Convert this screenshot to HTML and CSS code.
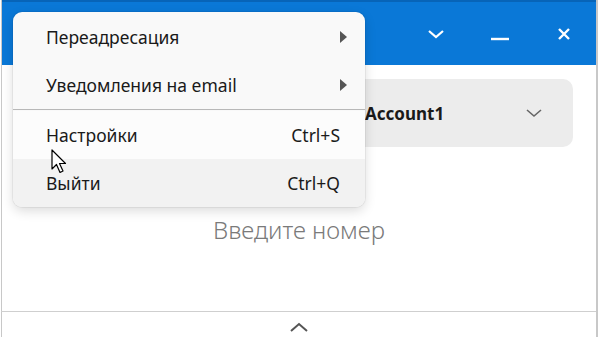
FILE: index.html
```html
<!DOCTYPE html>
<html lang="ru">
<head>
  <meta charset="UTF-8" />
  <title>Phone</title>
  <link rel="stylesheet" href="styles.css">
</head>
<body>
  <div class="window">
    <div class="titlebar">
      <span class="tb-btn">
        <svg width="18" height="12" viewBox="0 0 18 12"><path d="M2 3 L9 9 L16 3" fill="none" stroke="#fff" stroke-width="2.2"/></svg>
      </span>
      <span class="tb-btn">
        <svg width="20" height="14" viewBox="0 0 20 14"><path d="M1 12 H19" stroke="#fff" stroke-width="2.4"/></svg>
      </span>
      <span class="tb-btn">
        <svg width="14" height="14" viewBox="0 0 14 14"><path d="M2 2 L12 12 M12 2 L2 12" stroke="#fff" stroke-width="2.4"/></svg>
      </span>
    </div>

    <div class="content">
      <div class="account">
        <span class="account-name">Account1</span>
        <svg width="18" height="12" viewBox="0 0 18 12"><path d="M2 3 L9 9 L16 3" fill="none" stroke="#666" stroke-width="1.6"/></svg>
      </div>
      <div class="placeholder">Введите номер</div>
    </div>

    <div class="footer">
      <svg width="20" height="12" viewBox="0 0 20 12"><path d="M2 10 L10 3 L18 10" fill="none" stroke="#555" stroke-width="2"/></svg>
    </div>

    <div class="menu">
      <div class="item">
        <span>Переадресация</span>
        <svg width="9" height="14" viewBox="0 0 9 14"><path d="M1 1 L8 7 L1 13 Z" fill="#555"/></svg>
      </div>
      <div class="item">
        <span>Уведомления на email</span>
        <svg width="9" height="14" viewBox="0 0 9 14"><path d="M1 1 L8 7 L1 13 Z" fill="#555"/></svg>
      </div>
      <div class="sep"></div>
      <div class="item light">
        <span>Настройки</span>
        <span class="key">Ctrl+S</span>
      </div>
      <div class="item hover">
        <span>Выйти</span>
        <span class="key">Ctrl+Q</span>
      </div>
    </div>

    <svg class="cursor" width="18" height="26" viewBox="0 0 18 26">
      <path d="M1 1 L1 20 L5.5 15.5 L9 23.5 L12 22 L8.5 14.5 L14.5 14.5 Z" fill="#fff" stroke="#000" stroke-width="1.2" stroke-linejoin="round"/>
    </svg>
  </div>
</body>
</html>
```

FILE: styles.css
```css
html, body {
  margin: 0;
  padding: 0;
  background: #ffffff;
  font-family: 'Noto Sans', 'Open Sans', sans-serif;
  overflow: hidden;
}

.window {
  position: relative;
  width: 594px;
  height: 337px;
  border-left: 1px solid #c8c8c8;
  border-right: 2px solid #c8c8c8;
  margin-left: 1px;
  display: flex;
  flex-direction: column;
}

.titlebar {
  height: 63px;
  background: #0a78d7;
  border-top: 2px solid #0764b8;
  display: flex;
  justify-content: flex-end;
  align-items: center;
}

.tb-btn {
  width: 64px;
  height: 40px;
  display: flex;
  align-items: center;
  justify-content: center;
}

.content {
  flex: 1;
  display: flex;
  flex-direction: column;
  align-items: center;
}

.account {
  align-self: flex-end;
  margin: 14px 23px 0 0;
  width: 226px;
  height: 68px;
  background: #ececec;
  border-radius: 10px;
  display: flex;
  align-items: center;
  justify-content: space-between;
  padding: 0 30px 0 18px;
  box-sizing: border-box;
}

.account-name {
  font-size: 17px;
  font-weight: 700;
  color: #1a1a1a;
}

.placeholder {
  margin-top: 66px;
  font-size: 24px;
  font-weight: 300;
  color: #7a7a7a;
}

.footer {
  height: 20px;
  border-top: 1px solid #cfcfcf;
  display: flex;
  justify-content: center;
  align-items: center;
  margin-left: -1px;
  padding-top: 5px;
}

.menu {
  position: absolute;
  left: 11px;
  top: 12px;
  width: 352px;
  padding-top: 1px;
  background: #f9f9f9;
  border-radius: 9px;
  box-shadow: 0 4px 12px rgba(0,0,0,0.14), 0 0 0 1px rgba(0,0,0,0.05);
  overflow: hidden;
}

.item {
  height: 48px;
  display: flex;
  align-items: center;
  justify-content: space-between;
  padding: 0 17px 0 33px;
  font-size: 17.5px;
  color: #1a1a1a;
}

.item.light {
  background: #fcfcfc;
  padding-right: 25px;
}

.item.hover {
  background: #f2f2f2;
  padding-right: 25px;
}

.sep {
  height: 1px;
  background: #b8b8b8;
  margin-bottom: 1px;
}

.cursor {
  position: absolute;
  left: 49px;
  top: 149px;
}
```
